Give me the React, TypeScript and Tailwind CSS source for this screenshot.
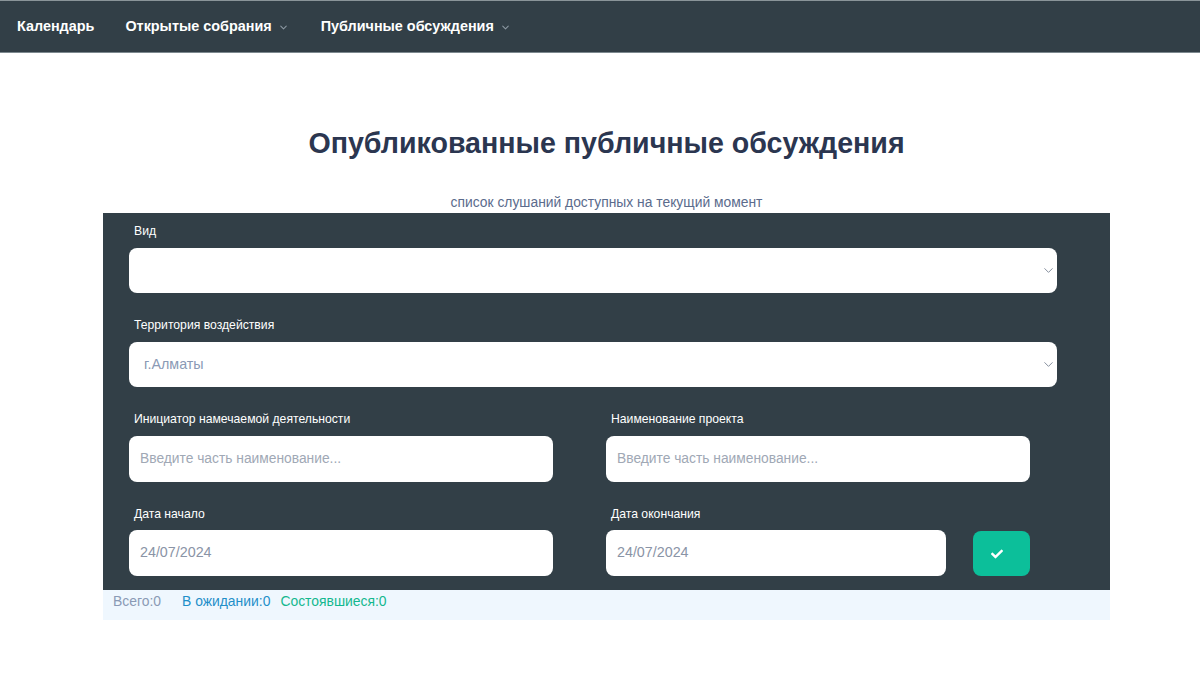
import { ChevronDown } from 'lucide-react'
import { FaCheck } from 'react-icons/fa'

function Field({ label, value, placeholder, width, compact }: { label: string; value?: string; placeholder?: string; width: string; compact?: boolean }) {
  return (
    <div className={width}>
      <div className={`${compact ? 'h-[34px]' : 'h-[35px]'} pt-[2px] pl-[5px] flex items-center text-[12.2px] text-white`}>{label}</div>
      <div className={`h-[46px] bg-white rounded-[8px] pl-[11px] flex items-center ${value ? 'text-[14.3px] text-[#8a94a6]' : 'text-[13.8px] text-[#a0a8b5]'}`}>
        {value ?? placeholder}
      </div>
    </div>
  )
}

function SelectField({ label, value }: { label: string; value?: string }) {
  return (
    <div className="w-[928px]">
      <div className="h-[35px] pt-[2px] pl-[5px] flex items-center text-[12.2px] text-white">{label}</div>
      <div className="h-[45px] bg-white rounded-[8px] pl-[15px] pr-[1px] flex items-center justify-between text-[14.3px] text-[#8a9ab5]">
        <span>{value}</span>
        <ChevronDown size={15} strokeWidth={1.5} className="text-[#7d8796]" />
      </div>
    </div>
  )
}

export default function App() {
  return (
    <div className="min-h-[675px] bg-white font-['Liberation_Sans',Arial,sans-serif]">
      <nav className="h-[53px] bg-[#323f47] border-t border-[#8a9499] border-b-[1px] border-b-[#7d898f] flex items-center pl-[17px] text-[14.4px] font-bold text-white">
        <a>Календарь</a>
        <a className="ml-[31px] flex items-center">
          Открытые собрания
          <ChevronDown size={11} strokeWidth={2.25} className="ml-[6px] mt-[2px] text-[#8d99a3]" />
        </a>
        <a className="ml-[32px] flex items-center">
          Публичные обсуждения
          <ChevronDown size={11} strokeWidth={2.25} className="ml-[6px] mt-[2px] text-[#8d99a3]" />
        </a>
      </nav>

      <main className="w-[1007px] ml-[103px]">
        <h1 className="pt-[72px] h-[136px] text-center text-[28.6px] leading-[36px] font-bold text-[#2b3650]">
          Опубликованные публичные обсуждения
        </h1>
        <p className="h-[24px] pt-[4px] text-center text-[13.85px] leading-[18px] text-[#5b6b8c]">
          список слушаний доступных на текущий момент
        </p>

        <div className="h-[377px] bg-[#323f47] pl-[26px] flex flex-col gap-[14px]">
          <SelectField label="Вид" />
          <SelectField label="Территория воздействия" value="г.Алматы" />
          <div className="flex gap-[53px]">
            <Field label="Инициатор намечаемой деятельности" placeholder="Введите часть наименование..." width="w-[424px]" />
            <Field label="Наименование проекта" placeholder="Введите часть наименование..." width="w-[424px]" />
          </div>
          <div className="flex items-start">
            <Field compact label="Дата начало" value="24/07/2024" width="w-[424px]" />
            <div className="ml-[53px]">
              <Field compact label="Дата окончания" value="24/07/2024" width="w-[340px]" />
            </div>
            <button className="ml-[27px] mt-[35px] w-[57px] h-[45px] rounded-[8px] bg-[#0cbf9a] flex items-center justify-center text-white">
              <FaCheck size={12} className="mr-[10px]" />
            </button>
          </div>
        </div>

        <div className="h-[30px] bg-[#eff7fe] pl-[10px] flex gap-[10px] text-[13.9px] leading-[22px]">
          <span className="text-[#8a9ab5] mr-[11px]">Всего:0</span>
          <span className="text-[#1f8fc9]">В ожидании:0</span>
          <span className="text-[#14b88f]">Состоявшиеся:0</span>
        </div>
      </main>
    </div>
  )
}
